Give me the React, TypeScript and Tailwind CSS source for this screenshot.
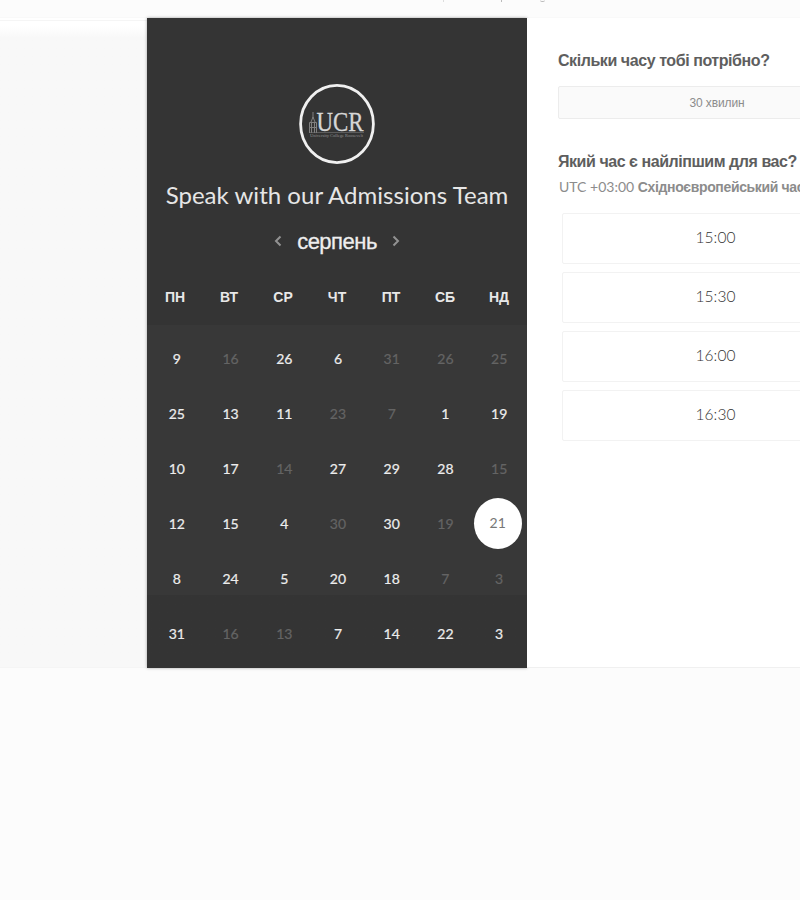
const weekdays = ['ПН', 'ВТ', 'СР', 'ЧТ', 'ПТ', 'СБ', 'НД'];

type Day = { n: number; off?: boolean; selected?: boolean };
const on = (n: number): Day => ({ n });
const off = (n: number): Day => ({ n, off: true });

const days: Day[] = [
  on(9), off(16), on(26), on(6), off(31), off(26), off(25),
  on(25), on(13), on(11), off(23), off(7), on(1), on(19),
  on(10), on(17), off(14), on(27), on(29), on(28), off(15),
  on(12), on(15), on(4), off(30), on(30), off(19), { n: 21, selected: true },
  on(8), on(24), on(5), on(20), on(18), off(7), off(3),
  on(31), off(16), off(13), on(7), on(14), on(22), on(3),
];

const times = ['15:00', '15:30', '16:00', '16:30'];

function Logo() {
  return (
    <svg width="76" height="80" viewBox="0 0 76 80" className="mt-[66px] shrink-0">
      <ellipse cx="38" cy="40" rx="36.4" ry="38.6" fill="none" stroke="#f0f0f0" strokeWidth="2.8" />
      <g stroke="#808080" fill="none" strokeWidth="1">
        <path d="M14 28v6M12 38l2-5 2 5M10.500 49V38.500h7V49M12.500 39v10M15.500 39v10M10 43.500h8" />
      </g>
      <text x="17.500" y="46.500" textLength="47" lengthAdjust="spacingAndGlyphs" fontSize="27" fill="#d6d6d6" stroke="#d6d6d6" strokeWidth=".3" className="font-['Liberation_Serif',serif]">UCR</text>
      <path d="M11 48.500h54" stroke="#777" strokeWidth=".6" />
      <text x="11" y="52.500" textLength="53" lengthAdjust="spacingAndGlyphs" fontSize="4.500" fill="#909090" className="font-['Liberation_Serif',serif]">University College Roosevelt</text>
    </svg>
  );
}

function Chevron({ left = false }: { left?: boolean }) {
  return (
    <svg width="8" height="12" viewBox="0 0 8 12" fill="none" stroke="#929292" strokeWidth="2">
      <path d={left ? 'M6.500 1.500L2 6l4.500 4.500' : 'M1.500 1.500L6 6l-4.500 4.500'} />
    </svg>
  );
}

function DayCell({ day }: { day: Day }) {
  if (day.selected) {
    return (
      <div className="flex items-center justify-center">
        <span className="-ml-[3px] -mt-px flex h-[51px] w-[48px] shrink-0 items-center justify-center rounded-[50%] bg-white pb-[2px] text-[#777]">{day.n}</span>
      </div>
    );
  }
  return (
    <div className={`flex items-center justify-center [-webkit-text-stroke:0.2px_currentColor] ${day.off ? 'text-[#646464]' : 'text-[#ededed]'}`}>{day.n}</div>
  );
}

function Calendar() {
  return (
    <section className="flex h-[650px] w-[380px] shrink-0 flex-col items-center bg-[#343434] shadow-[0_0_3px_rgba(0,0,0,0.35)]">
      <Logo />
      <h1 className="mt-[15px] whitespace-nowrap font-['Lato',sans-serif] text-[24px] leading-[32px] tracking-[0.03px] text-[#e6e6e6]">Speak with our Admissions Team</h1>
      <div className="mt-[14px] flex h-[32px] items-center gap-[14px]">
        <Chevron left />
        <span className="w-[82px] whitespace-nowrap pt-px text-center text-[22px] leading-[32px] tracking-[-0.5px] text-[#eee] [-webkit-text-stroke:0.3px_#eee]">серпень</span>
        <Chevron />
      </div>
      <div className="mt-[24px] grid h-[32px] w-[378px] grid-cols-7 items-center text-center text-[14px] font-bold text-[#e8e8e8]">
        {weekdays.map((d) => <span key={d}>{d}</span>)}
      </div>
      <div className="mt-[12px] flex w-full flex-col items-center bg-linear-to-b from-[#383838] from-[270px] to-[#343434] to-[270px]">
        <div className="mt-[6px] grid w-[378px] auto-rows-[55px] grid-cols-7 pl-[2px] font-['Lato',sans-serif] text-[14px]">
          {days.map((d, i) => <DayCell key={i} day={d} />)}
        </div>
      </div>
    </section>
  );
}

function Options() {
  return (
    <section className="min-w-0 flex-1 overflow-hidden border-b border-[#f0f0f0] bg-white pl-[31px]">
      <h2 className="mt-[32px] whitespace-nowrap text-[16px] font-bold leading-[22px] tracking-[-0.43px] text-[#5e5e5e]">Скільки часу тобі потрібно?</h2>
      <div className="mt-[14px] flex h-[33px] w-[318px] items-center justify-center rounded-[2px] border border-[#ececec] bg-[#fafafa] text-[12px] tracking-[-0.1px] text-[#8c8c8c]">30 хвилин</div>
      <h2 className="mt-[32px] whitespace-nowrap text-[16px] font-bold leading-[22px] tracking-[-0.45px] text-[#5e5e5e]">Який час є найліпшим для вас?</h2>
      <p className="mt-[4px] whitespace-nowrap pl-px text-[14px] leading-[20px] text-[#8c8c8c]">
        <span className="font-['Lato',sans-serif] text-[14px]">UTC +03:00 </span>
        <b className="tracking-[-0.35px]">Східноєвропейський час</b>
      </p>
      <div className="ml-[4px] mt-[16px] flex w-[307px] flex-col gap-[8px]">
        {times.map((t) => (
          <button key={t} className="h-[51px] rounded-[2px] border border-[#f2f2f2] bg-white pb-px font-['Lato',sans-serif] text-[15.5px] font-light tracking-[0.1px] text-[#333]">{t}</button>
        ))}
      </div>
    </section>
  );
}

export default function App() {
  return (
    <div className="h-[900px] w-[800px] overflow-hidden bg-[#fcfcfc] font-['Liberation_Sans',Arial,sans-serif]">
      <header className="flex h-[18px] items-start border-b border-[#f9f9f9] pl-[443px]">
        <span className="h-[2px] w-px bg-[#ddd]" />
        <span className="ml-[57px] h-[2px] w-px bg-[#bbb]" />
        <span className="ml-[38px] h-[2px] w-[5px] rounded-b-full border-b border-[#bbb]" />
      </header>
      <main className="flex h-[650px]">
        <div className="w-[147px] shrink-0 border-b border-[#f5f5f5] bg-linear-to-b from-white from-[8px] via-[#f8f8f8] via-[20px] to-[#f8f8f8]">
          <div className="mt-[2px] h-px bg-[#f5f5f5]" />
        </div>
        <Calendar />
        <Options />
      </main>
    </div>
  );
}
